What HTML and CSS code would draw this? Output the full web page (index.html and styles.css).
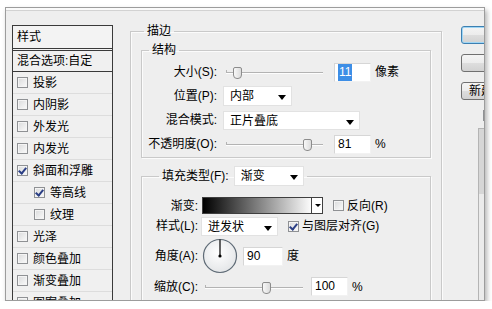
FILE: index.html
```html
<!DOCTYPE html>
<html lang="zh-CN">
    <head>
        <meta charset="utf-8">
        <title>图层样式 - 描边</title>
        <link rel="stylesheet" href="styles.css">
    </head>
    <body>
        <div class="dialog">
            <div class="styles">
                <div class="styles-head">样式</div>
                <div class="styles-row blend">混合选项:自定</div>
                <div class="styles-row"><span class="cb"></span>投影</div>
                <div class="styles-row"><span class="cb"></span>内阴影</div>
                <div class="styles-row"><span class="cb"></span>外发光</div>
                <div class="styles-row"><span class="cb"></span>内发光</div>
                <div class="styles-row"><span class="cb on"></span>斜面和浮雕</div>
                <div class="styles-row sub"><span class="cb on"></span>等高线</div>
                <div class="styles-row sub"><span class="cb"></span>纹理</div>
                <div class="styles-row"><span class="cb"></span>光泽</div>
                <div class="styles-row"><span class="cb"></span>颜色叠加</div>
                <div class="styles-row"><span class="cb"></span>渐变叠加</div>
                <div class="styles-row"><span class="cb"></span>图案叠加</div>
            </div>

            <div class="main">
                <fieldset class="group outer">
                    <legend class="title">描边</legend>

                    <fieldset class="group struct">
                        <legend class="sub-title">结构</legend>
                        <div class="form">
                            <span class="lbl">大小(S):</span>
                            <div class="ctl">
                                <div class="slider"><span class="thumb" style="left: 10px"></span></div>
                                <span class="field gap"><span class="sel">11</span></span>
                                <span class="unit">像素</span>
                            </div>

                            <span class="lbl">位置(P):</span>
                            <div class="ctl">
                                <span class="select pos">内部</span>
                            </div>

                            <span class="lbl">混合模式:</span>
                            <div class="ctl">
                                <span class="select mode">正片叠底</span>
                            </div>

                            <span class="lbl">不透明度(O):</span>
                            <div class="ctl">
                                <div class="slider"><span class="thumb" style="left: 80px"></span></div>
                                <span class="field gap">81</span>
                                <span class="unit">%</span>
                            </div>
                        </div>
                    </fieldset>

                    <fieldset class="group fill">
                        <legend class="fill-title">填充类型(F): <span class="select kind">渐变</span></legend>
                        <div class="form fill-form">
                            <span class="lbl">渐变:</span>
                            <div class="ctl">
                                <span class="gradient"><span class="gradient-drop"></span></span>
                                <span class="cb check-gap"></span>
                                <span class="check-text">反向(R)</span>
                            </div>

                            <span class="lbl">样式(L):</span>
                            <div class="ctl">
                                <span class="select style">迸发状</span>
                                <span class="cb on check-gap"></span>
                                <span class="check-text">与图层对齐(G)</span>
                            </div>

                            <span class="lbl">角度(A):</span>
                            <div class="ctl">
                                <svg class="dial" width="36" height="36" viewBox="0 0 36 36">
                                    <defs>
                                        <radialGradient id="dialFill" cx="0.45" cy="0.4" r="0.6">
                                            <stop offset="0" stop-color="#ffffff"/>
                                            <stop offset="1" stop-color="#e4e6e8"/>
                                        </radialGradient>
                                    </defs>
                                    <circle cx="18" cy="18" r="16.5" fill="url(#dialFill)" stroke="#5f6b76" stroke-width="1.2"/>
                                    <line x1="18" y1="18" x2="18" y2="1.5" stroke="#000" stroke-width="1.2"/>
                                    <circle cx="18" cy="18" r="1.6" fill="#000"/>
                                </svg>
                                <span class="field angle">90</span>
                                <span class="unit">度</span>
                            </div>

                            <span class="lbl">缩放(C):</span>
                            <div class="ctl">
                                <div class="slider scale"><span class="thumb" style="left: 61px"></span></div>
                                <span class="field scale-field">100</span>
                                <span class="unit">%</span>
                            </div>
                        </div>
                    </fieldset>
                </fieldset>
            </div>

            <div class="side">
                <span class="btn default"></span>
                <span class="btn"></span>
                <span class="btn">新建样式...</span>
                <span class="cb on preview-check"></span>
                <div class="preview"></div>
            </div>
        </div>
    </body>
</html>
```

FILE: styles.css
```css
body {
    margin: 0;
    background: #ffffff;
    font-family: "Liberation Sans", "Noto Sans CJK SC", sans-serif;
    font-size: 12px;
    line-height: 14px;
    color: #000;
}

.dialog {
    display: flex;
    align-items: flex-start;
    margin: 7px 0 0 5px;
    width: 478px;
    height: 292px;
    border: 1px solid #9c9c9c;
    background: #eeeeee;
    box-shadow: 2px 3px 5px rgba(0, 0, 0, 0.3), inset 0 2px 0 #fafafa, inset 0 3px 0 #d2d2d2;
    overflow: hidden;
}

/* left list */

.styles {
    flex: none;
    width: 99px;
    height: 300px;
    margin: 17px 0 0 6px;
    border: 1px solid #3a3a3a;
    background: #f0f0f0;
}

.styles-head {
    height: 22px;
    line-height: 22px;
    padding-left: 4px;
    border-bottom: 3px double #3a3a3a;
    background: #f3f3f3;
}

.styles-row {
    display: flex;
    align-items: center;
    gap: 5px;
    height: 21px;
    padding-left: 4px;
    border-bottom: 1px solid #dddddd;
}

.styles-row.blend {
    height: 20px;
    border-bottom-color: #3a3a3a;
}

.styles-row.sub {
    padding-left: 21px;
}

/* checkbox */

.cb {
    position: relative;
    flex: none;
    display: inline-block;
    width: 11px;
    height: 11px;
    box-sizing: border-box;
    border: 1px solid #8f9194;
    background: linear-gradient(135deg, #d9dadb, #fbfbfb);
    box-shadow: inset 0 0 0 1px #f4f4f4;
}

.cb.on::after {
    content: "";
    position: absolute;
    left: 2px;
    top: 0px;
    width: 3px;
    height: 6px;
    border-right: 2px solid #2b3f85;
    border-bottom: 2px solid #2b3f85;
    transform: rotate(40deg);
}

/* groups */

.main {
    flex: none;
    margin: 16px 0 0 17px;
}

.group {
    margin: 0;
    min-width: 0;
    border: 1px solid #c9c9c9;
    box-shadow: 1px 1px 0 #fbfbfb, inset 1px 1px 0 #fbfbfb;
}

.outer {
    width: 292px;
    height: 300px;
    padding: 5px 8px 0 10px;
}

.title {
    margin-left: 3px;
    padding: 0 3px;
}

.struct {
    width: 288px;
    padding: 5px 0 3px 0;
}

.sub-title {
    margin-left: 7px;
    padding: 0 3px;
}

.fill {
    width: 288px;
    margin-top: 8px;
    padding: 11px 0 6px 0;
}

.fill-title {
    display: flex;
    align-items: center;
    margin-left: 17px;
    padding: 0 3px;
}

.form {
    display: grid;
    grid-template-columns: 75px auto;
    grid-template-rows: 20px 20px 20px 20px;
    column-gap: 6px;
    row-gap: 4px;
    align-items: center;
}

.fill-form {
    grid-template-columns: 56px auto;
    grid-template-rows: 17px 18px 36px 19px;
    column-gap: 3px;
    row-gap: 3px;
}

.lbl {
    text-align: right;
    white-space: nowrap;
}

.ctl {
    display: flex;
    align-items: center;
    height: 100%;
}

/* controls */

.slider {
    position: relative;
    flex: none;
    width: 100px;
    height: 20px;
}

.slider::before {
    content: "";
    position: absolute;
    left: 3px;
    right: 0;
    top: 10px;
    height: 1px;
    background: #b3b3b3;
    box-shadow: 0 1px 0 #fdfdfd;
}

.slider::after {
    content: "";
    position: absolute;
    left: 3px;
    top: 8px;
    width: 1px;
    height: 3px;
    background: #b3b3b3;
}

.slider.scale {
    width: 102px;
}

.slider.scale::before,
.slider.scale::after {
    left: 4px;
}

.thumb {
    position: absolute;
    top: 5px;
    width: 7px;
    height: 10px;
    border: 1px solid #8c8c8c;
    border-radius: 2px 2px 4px 4px;
    background: linear-gradient(90deg, #f8f8f8, #dcdcdc);
    z-index: 1;
}

.field {
    flex: none;
    display: inline-block;
    width: 37px;
    height: 19px;
    box-sizing: border-box;
    padding-left: 3px;
    line-height: 17px;
    background: #fff;
    border: 1px solid #d6d6d6;
    border-right-color: #f2f2f2;
    border-bottom-color: #f2f2f2;
}

.field.gap {
    margin-left: 11px;
}

.field .sel {
    display: inline-block;
    padding: 0 1px;
    background: #3d8ee6;
    color: #fff;
}

.field.angle {
    width: 40px;
    margin-left: 5px;
}

.field.scale-field {
    margin-left: 8px;
}

.unit {
    margin-left: 4px;
}

.select {
    position: relative;
    flex: none;
    display: inline-block;
    height: 20px;
    box-sizing: border-box;
    padding-left: 6px;
    line-height: 19px;
    background: #fff;
    border: 1px solid #e2e2e2;
}

.select::after {
    content: "";
    position: absolute;
    right: 5px;
    top: 8px;
    border-left: 4px solid transparent;
    border-right: 4px solid transparent;
    border-top: 5px solid #000;
}

.select.pos {
    width: 69px;
}

.select.mode {
    width: 137px;
    height: 19px;
}

.select.kind {
    width: 70px;
    margin-left: 5px;
}

.select.style {
    width: 77px;
    height: 19px;
}

.gradient {
    position: relative;
    flex: none;
    display: inline-block;
    width: 121px;
    height: 17px;
    margin-left: 1px;
    box-sizing: border-box;
    border: 1px solid #3f3f3f;
    background: linear-gradient(90deg, #000 0%, #ffffff 92%);
}

.gradient-drop {
    position: absolute;
    right: 0;
    top: 0;
    bottom: 0;
    width: 10px;
    border-left: 1px solid #3f3f3f;
    background: #fff;
}

.gradient-drop::after {
    content: "";
    position: absolute;
    left: 3px;
    top: 6px;
    border-left: 3px solid transparent;
    border-right: 3px solid transparent;
    border-top: 3px solid #000;
}

.check-gap {
    margin-left: 10px;
}

.check-text {
    margin-left: 3px;
    white-space: nowrap;
}

.dial {
    flex: none;
    margin-left: 1px;
}

/* right side */

.side {
    flex: none;
    display: flex;
    flex-direction: column;
    align-items: flex-start;
    width: 60px;
    margin: 18px 0 0 19px;
}

.btn {
    display: block;
    width: 60px;
    height: 18px;
    margin-bottom: 10px;
    box-sizing: border-box;
    padding-left: 7px;
    line-height: 16px;
    white-space: nowrap;
    border: 1px solid #707070;
    border-radius: 3px;
    background: linear-gradient(#f4f4f4, #ececec 50%, #dedede 50%, #d2d2d2);
}

.btn.default {
    border-color: #3c7fb1;
    box-shadow: inset 0 0 0 1px #9fd6f5;
}

.preview-check {
    margin: 0 0 0 22px;
}

.preview {
    width: 40px;
    height: 200px;
    margin: 7px 0 0 17px;
    border-left: 1px solid #b4b4b4;
    border-top: 1px solid #b4b4b4;
    background: linear-gradient(#d6d6d6 0, #d6d6d6 65px, #ebebeb 65px);
}
```
